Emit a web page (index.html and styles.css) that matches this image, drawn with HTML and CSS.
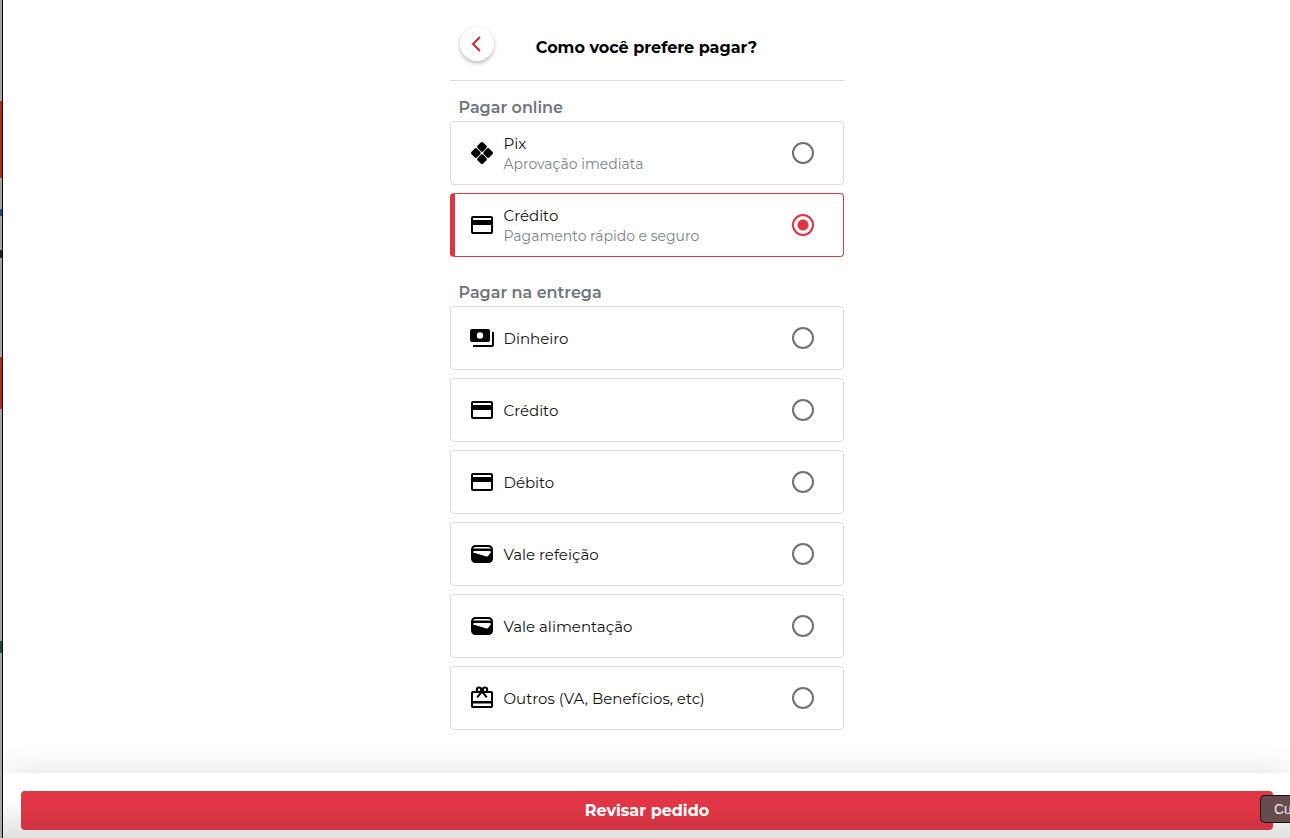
FILE: index.html
```html
<!DOCTYPE html>
<html lang="pt-BR">
<head>
  <meta charset="UTF-8" />
  <meta name="viewport" content="width=device-width, initial-scale=1.0" />
  <title>Como você prefere pagar?</title>
  <link rel="stylesheet" href="styles.css">
</head>
<body>
  <!-- Shared icons -->
  <svg class="sprite" aria-hidden="true">
    <symbol id="icon-pix" viewBox="0 0 24 24">
      <g transform="rotate(45 12 12)">
        <rect x="3.700" y="3.700" width="7.900" height="7.900" rx="1.800"/>
        <rect x="12.400" y="3.700" width="7.900" height="7.900" rx="1.800"/>
        <rect x="3.700" y="12.400" width="7.900" height="7.900" rx="1.800"/>
        <rect x="12.400" y="12.400" width="7.900" height="7.900" rx="1.800"/>
      </g>
    </symbol>
    <symbol id="icon-card" viewBox="0 0 24 24">
      <path fill-rule="evenodd" d="M3 3h18a2 2 0 0 1 2 2v14a2 2 0 0 1-2 2H3a2 2 0 0 1-2-2V5a2 2 0 0 1 2-2zm0 2v2h18V5zm0 7v7h18v-7z"/>
    </symbol>
    <symbol id="icon-cash" viewBox="0 0 24 24">
      <path fill-rule="evenodd" d="M2 3h16a2 2 0 0 1 2 2v9a2 2 0 0 1-2 2H2a2 2 0 0 1-2-2V5a2 2 0 0 1 2-2zm8 3.300a3.200 3.200 0 1 0 0 6.400 3.200 3.200 0 0 0 0-6.400z"/>
      <path d="M22 6h2v13a2 2 0 0 1-2 2H3v-2h19z"/>
    </symbol>
    <symbol id="icon-wallet" viewBox="0 0 24 24">
      <path fill-rule="evenodd" d="M5.500 3h13A4.500 4.500 0 0 1 23 7.500v9a4.500 4.500 0 0 1-4.500 4.500h-13A4.500 4.500 0 0 1 1 16.500v-9A4.500 4.500 0 0 1 5.500 3zm0 2c-1.300 0-2 .7-2.300 1.800 .6-.2 1.200-.3 2-.3h13.600c.8 0 1.400.1 2 .3-.3-1.100-1-1.800-2.300-1.800zM5 9c-1 0-1.700.4-2 1.500l13.600 4c.6.2 1.100 0 1.500-.4l3-4c-.4-.8-1.100-1.100-2.100-1.100z"/>
    </symbol>
    <symbol id="icon-gift" viewBox="0 0 24 24">
      <path fill-rule="evenodd" d="M2.800 5h18.400c1 0 1.800.8 1.800 1.800v13.400c0 1-.8 1.800-1.800 1.800H2.800c-1 0-1.800-.8-1.800-1.800V6.800C1 5.800 1.800 5 2.800 5zM3 7v8h18V7zm0 10.500V20h18v-2.500z"/>
      <path fill="none" stroke="#000" stroke-width="2" d="M12 5.500 7.200 11.300M12 5.500l4.800 5.800"/>
      <circle cx="9" cy="3.700" r="2.200" fill="#fff" stroke="#000" stroke-width="2"/>
      <circle cx="15" cy="3.700" r="2.200" fill="#fff" stroke="#000" stroke-width="2"/>
    </symbol>
  </svg>

  <main class="content">
    <header class="header">
      <button type="button" class="back" aria-label="Voltar">
        <svg viewBox="0 0 18 18"><path d="M12 2 5 9l7 7"/></svg>
      </button>
      <h1>Como você prefere pagar?</h1>
    </header>

    <form class="payments" id="payments">
      <section>
        <h2>Pagar online</h2>
        <div class="options">
          <label class="option">
            <svg class="icon"><use href="#icon-pix"/></svg>
            <span class="text">Pix<small>Aprovação imediata</small></span>
            <input type="radio" name="payment">
          </label>
          <label class="option selected">
            <svg class="icon"><use href="#icon-card"/></svg>
            <span class="text">Crédito<small>Pagamento rápido e seguro</small></span>
            <input type="radio" name="payment" checked>
          </label>
        </div>
      </section>

      <section>
        <h2>Pagar na entrega</h2>
        <div class="options">
          <label class="option">
            <svg class="icon"><use href="#icon-cash"/></svg>
            <span class="text">Dinheiro</span>
            <input type="radio" name="payment">
          </label>
          <label class="option">
            <svg class="icon"><use href="#icon-card"/></svg>
            <span class="text">Crédito</span>
            <input type="radio" name="payment">
          </label>
          <label class="option">
            <svg class="icon"><use href="#icon-card"/></svg>
            <span class="text">Débito</span>
            <input type="radio" name="payment">
          </label>
          <label class="option">
            <svg class="icon"><use href="#icon-wallet"/></svg>
            <span class="text">Vale refeição</span>
            <input type="radio" name="payment">
          </label>
          <label class="option">
            <svg class="icon"><use href="#icon-wallet"/></svg>
            <span class="text">Vale alimentação</span>
            <input type="radio" name="payment">
          </label>
          <label class="option">
            <svg class="icon"><use href="#icon-gift"/></svg>
            <span class="text">Outros (VA, Benefícios, etc)</span>
            <input type="radio" name="payment">
          </label>
        </div>
      </section>
    </form>
  </main>

  <footer class="footer">
    <button type="submit" form="payments" class="submit">Revisar pedido</button>
    <div class="tooltip">Cu</div>
  </footer>
</body>
</html>
```

FILE: styles.css
```css
* {
  margin: 0;
  padding: 0;
  box-sizing: border-box;
}
body {
  display: flex;
  flex-direction: column;
  min-height: 100vh;
  padding-left: 3px;
  overflow-x: hidden;
  font-family: Montserrat, Inter, sans-serif;
  font-size: 15px;
  line-height: 20px;
  color: #111;
  /* strip of the page behind the drawer */
  background:
    linear-gradient(#000, #000) 2px 0 / 1px 100% no-repeat,
    linear-gradient(#a92f16, #a92f16) 0 101px / 2px 77px no-repeat,
    linear-gradient(#1d4795, #1d4795) 0 209px / 2px 7px no-repeat,
    linear-gradient(#222, #222) 0 250px / 2px 8px no-repeat,
    linear-gradient(#a92f16, #a92f16) 0 357px / 2px 52px no-repeat,
    linear-gradient(#164c3b, #164c3b) 0 641px / 2px 12px no-repeat,
    linear-gradient(#a5a5a5, #a5a5a5) 0 0 / 2px 100% no-repeat,
    #fff;
}
button {
  font-family: inherit;
  border: none;
  cursor: pointer;
}
.sprite {
  position: absolute;
  width: 0;
  height: 0;
}
.content {
  flex: 1;
  width: 100%;
  max-width: 394px;
  margin: 0 auto;
}

/* HEADER */
.header {
  display: grid;
  grid-template-columns: 34px 1fr 34px;
  align-items: center;
  padding: 27px 10px 19px;
  border-bottom: 1px solid #dcdcdc;
}
.header h1 {
  padding-top: 8px;
  font-size: 16px;
  font-weight: 700;
  text-align: center;
  color: #000;
}
.back {
  display: flex;
  align-items: center;
  justify-content: center;
  width: 34px;
  height: 34px;
  border-radius: 50%;
  background: #fff;
  box-shadow: 0 2px 4px rgba(0,0,0,0.3);
}
.back svg {
  width: 18px;
  height: 18px;
  fill: none;
  stroke: #d32635;
  stroke-width: 2;
}

/* PAYMENT OPTIONS */
.payments {
  display: flex;
  flex-direction: column;
  gap: 26px;
  padding: 17px 0 24px;
}
.payments h2 {
  padding-left: 9px;
  margin-bottom: 3px;
  font-size: 16px;
  font-weight: 600;
  color: #6f747e;
}
.options {
  display: flex;
  flex-direction: column;
  gap: 8px;
}
.option {
  display: flex;
  align-items: center;
  gap: 10px;
  height: 64px;
  padding: 0 29px 0 19px;
  border: 1px solid #dcdcdc;
  border-radius: 4px;
  cursor: pointer;
}
.option.selected {
  padding-left: 15px;
  border-color: #cf3f4b;
  border-left: 5px solid #dc3545;
}
.icon {
  width: 24px;
  height: 24px;
  fill: #000;
}
.text {
  flex: 1;
  padding-top: 2px;
  font-size: 15px;
}
.text small {
  display: block;
  font-size: 14px;
  color: #7c838a;
}
.option input {
  appearance: none;
  width: 22px;
  height: 22px;
  border: 2px solid #707070;
  border-radius: 50%;
}
.option input:checked {
  border-color: #dc3545;
  background: radial-gradient(circle, #dc3545 5px, transparent 6px);
}

/* FOOTER */
.footer {
  position: relative;
  padding: 18px 17px 8px 18px;
  background: linear-gradient(#fff 40%, #e0e0e0);
  box-shadow: 0 0 36px rgba(0,0,0,0.12);
  clip-path: inset(-40px 0 0 0);
}
.submit {
  display: block;
  width: 100%;
  height: 39px;
  border-radius: 4px;
  background: linear-gradient(#e03645 40%, #d03341);
  color: #fff;
  font-size: 16px;
  font-weight: 700;
}
.tooltip {
  position: absolute;
  top: 22px;
  right: 0;
  width: 30px;
  height: 28px;
  padding-left: 13px;
  overflow: hidden;
  border: 1px solid #111;
  border-right: none;
  border-radius: 5px 0 0 5px;
  background: #674b4e;
  color: #eee;
  font-family: "Liberation Sans", Arial, sans-serif;
  font-size: 14px;
  line-height: 26px;
}
```
